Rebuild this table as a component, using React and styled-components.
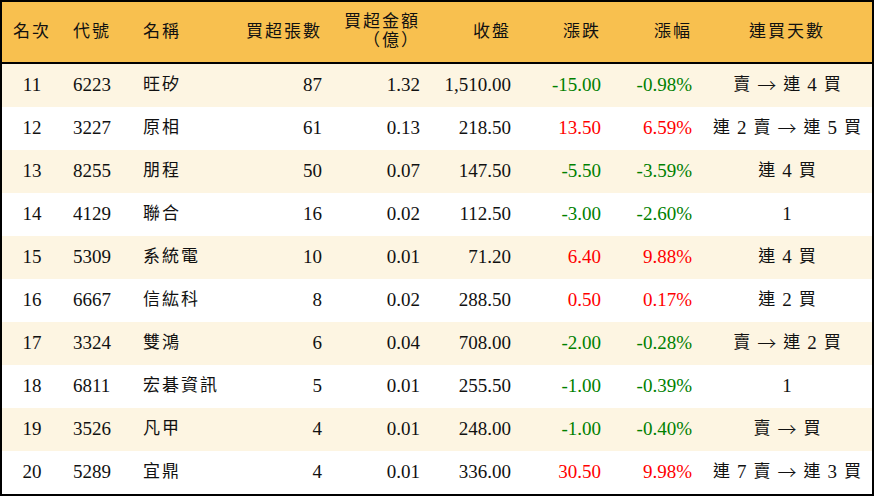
import styled, { createGlobalStyle } from 'styled-components'

const GlobalStyle = createGlobalStyle`
    html, body {
        margin: 0;
        padding: 0;
        background: #ffffff;
    }
`

const cols = '60px 70px 100px 100px 98px 91px 90px 91px 170px'

const Board = styled.div`
    width: 874px;
    height: 496px;
    box-sizing: border-box;
    border: 2px solid #000;
    font-family: "Liberation Serif", "Noto Sans CJK TC", serif;
    font-size: 19px;
    color: #111;
`

const HeadRow = styled.div`
    display: grid;
    grid-template-columns: ${cols};
    height: 60px;
    background: #f8c04f;
    border-bottom: 2px solid #000;
`

const Row = styled.div`
    display: grid;
    grid-template-columns: ${cols};
    height: 43px;
    background: ${p => (p.$alt ? '#fdf5e2' : '#ffffff')};
`

const Cell = styled.div`
    display: flex;
    flex-direction: column;
    justify-content: center;
    align-items: ${p => (p.$align === 'left' ? 'flex-start' : p.$align === 'right' ? 'flex-end' : 'center')};
    text-align: ${p => p.$align || 'center'};
    padding: ${p => (p.$align === 'left' ? '0 0 0 11px' : p.$align === 'right' ? '0 10px 0 0' : '0')};
    white-space: nowrap;
    line-height: 1.1;
    color: ${p => (p.$tone === 'up' ? '#ff0000' : p.$tone === 'down' ? '#008000' : 'inherit')};
`

const Cjk = styled.span`
    font-size: 17px;
    letter-spacing: 2px;
`

const Streak = styled.span`
    display: flex;
    align-items: center;
    gap: 7px;
`

const Token = styled.span`
    font-size: ${p => (p.$kind === 'cjk' ? '17px' : '19px')};
    font-family: ${p => (p.$kind === 'arrow' ? '"Noto Sans CJK TC", sans-serif' : 'inherit')};
    font-weight: ${p => (p.$kind === 'arrow' ? 300 : 'normal')};
`

const headers = [
    ['名次', 'center'],
    ['代號', 'left'],
    ['名稱', 'left'],
    ['買超張數', 'right'],
    [['買超金額', '（億）'], 'right'],
    ['收盤', 'right'],
    ['漲跌', 'right'],
    ['漲幅', 'right'],
    ['連買天數', 'center'],
]

const rows = [
    [11, '6223', '旺矽', '87', '1.32', '1,510.00', '-15.00', '-0.98%', '賣 → 連 4 買'],
    [12, '3227', '原相', '61', '0.13', '218.50', '13.50', '6.59%', '連 2 賣 → 連 5 買'],
    [13, '8255', '朋程', '50', '0.07', '147.50', '-5.50', '-3.59%', '連 4 買'],
    [14, '4129', '聯合', '16', '0.02', '112.50', '-3.00', '-2.60%', '1'],
    [15, '5309', '系統電', '10', '0.01', '71.20', '6.40', '9.88%', '連 4 買'],
    [16, '6667', '信紘科', '8', '0.02', '288.50', '0.50', '0.17%', '連 2 買'],
    [17, '3324', '雙鴻', '6', '0.04', '708.00', '-2.00', '-0.28%', '賣 → 連 2 買'],
    [18, '6811', '宏碁資訊', '5', '0.01', '255.50', '-1.00', '-0.39%', '1'],
    [19, '3526', '凡甲', '4', '0.01', '248.00', '-1.00', '-0.40%', '賣 → 買'],
    [20, '5289', '宜鼎', '4', '0.01', '336.00', '30.50', '9.98%', '連 7 賣 → 連 3 買'],
]

const kindOf = t => (t === '→' ? 'arrow' : /\d/.test(t) ? 'num' : 'cjk')

export default function App() {
    return (
        <>
            <GlobalStyle />
            <Board>
                <HeadRow>
                    {headers.map(([label, align], i) => (
                        <Cell key={i} $align={align}>
                            {Array.isArray(label)
                                ? label.map(l => <Cjk key={l}>{l}</Cjk>)
                                : <Cjk>{label}</Cjk>}
                        </Cell>
                    ))}
                </HeadRow>

                {rows.map((r, i) => {
                    const tone = r[6].startsWith('-') ? 'down' : 'up'
                    return (
                        <Row key={r[0]} $alt={i % 2 === 0}>
                            <Cell>{r[0]}</Cell>
                            <Cell $align="left">{r[1]}</Cell>
                            <Cell $align="left"><Cjk>{r[2]}</Cjk></Cell>
                            <Cell $align="right">{r[3]}</Cell>
                            <Cell $align="right">{r[4]}</Cell>
                            <Cell $align="right">{r[5]}</Cell>
                            <Cell $align="right" $tone={tone}>{r[6]}</Cell>
                            <Cell $align="right" $tone={tone}>{r[7]}</Cell>
                            <Cell>
                                <Streak>
                                    {r[8].split(' ').map((t, j) => (
                                        <Token key={j} $kind={kindOf(t)}>{t}</Token>
                                    ))}
                                </Streak>
                            </Cell>
                        </Row>
                    )
                })}
            </Board>
        </>
    )
}
